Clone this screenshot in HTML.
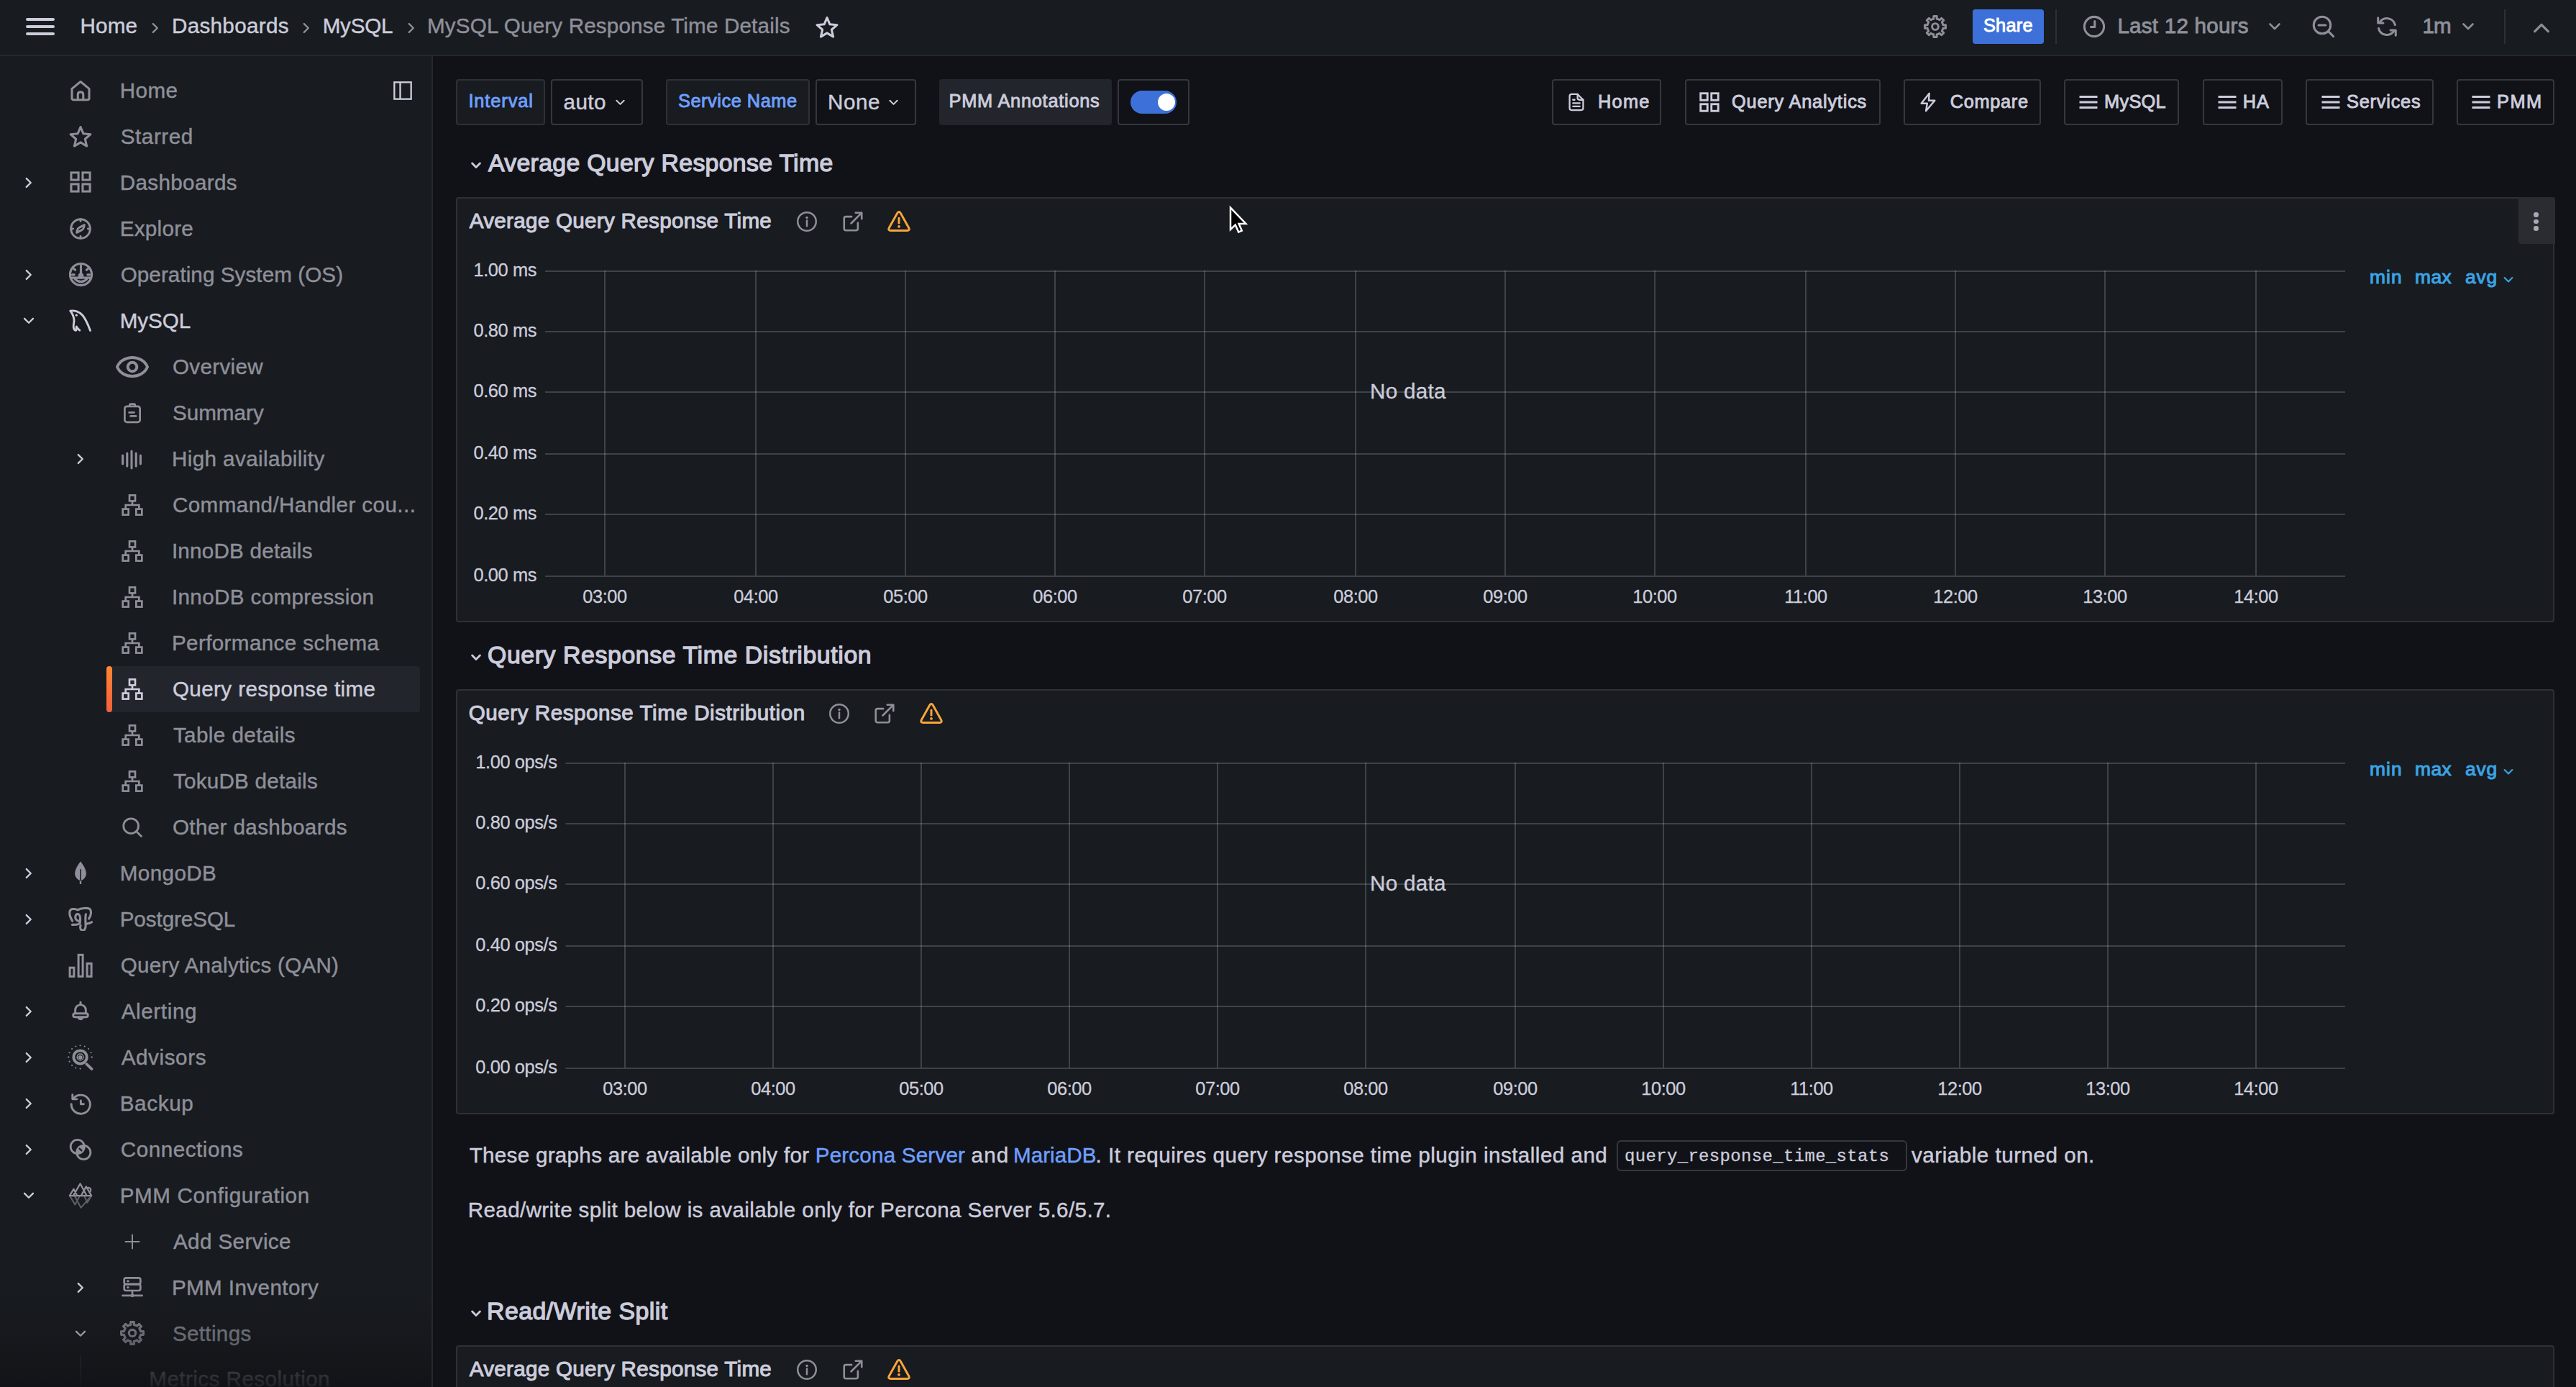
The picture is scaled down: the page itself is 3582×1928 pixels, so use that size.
<!DOCTYPE html>
<html><head><meta charset="utf-8"><style>
html,body{margin:0;padding:0}
body{width:3582px;height:1928px;overflow:hidden;position:relative;background:#111217;font-family:"Liberation Sans",sans-serif;color:#ccccdc}
svg{display:block}
</style></head><body>
<div style="position:absolute;left:0;top:0;width:3582px;height:76px;background:#181b1f"></div><div style="position:absolute;left:0;top:76px;width:3582px;height:2px;background:rgba(204,204,220,0.12)"></div><div style="position:absolute;left:36px;top:25px;width:40px;height:4.2px;border-radius:2.1px;background:#ccccdc"></div><div style="position:absolute;left:36px;top:35px;width:40px;height:4.2px;border-radius:2.1px;background:#ccccdc"></div><div style="position:absolute;left:36px;top:45px;width:40px;height:4.2px;border-radius:2.1px;background:#ccccdc"></div><div style="position:absolute;left:111.50px;top:21.45px;font-family:'Liberation Sans';font-size:29.60px;line-height:1;white-space:nowrap;letter-spacing:0.150px;color:#ccccdc;-webkit-text-stroke:0.45px #ccccdc;">Home</div><div style="position:absolute;left:205.0px;top:28.0px;width:22px;height:22px;color:#8e8f9a;"><svg width="22" height="22" viewBox="0 0 24 24"><g fill="none" stroke="currentColor" stroke-width="2.6" stroke-linecap="round" stroke-linejoin="round"><path d="M8.5 5.5 L15 12 L8.5 18.5"/></g></svg></div><div style="position:absolute;left:239.00px;top:21.45px;font-family:'Liberation Sans';font-size:29.60px;line-height:1;white-space:nowrap;letter-spacing:0.322px;color:#ccccdc;-webkit-text-stroke:0.45px #ccccdc;">Dashboards</div><div style="position:absolute;left:415.0px;top:28.0px;width:22px;height:22px;color:#8e8f9a;"><svg width="22" height="22" viewBox="0 0 24 24"><g fill="none" stroke="currentColor" stroke-width="2.6" stroke-linecap="round" stroke-linejoin="round"><path d="M8.5 5.5 L15 12 L8.5 18.5"/></g></svg></div><div style="position:absolute;left:448.70px;top:21.45px;font-family:'Liberation Sans';font-size:29.60px;line-height:1;white-space:nowrap;letter-spacing:-0.216px;color:#ccccdc;-webkit-text-stroke:0.45px #ccccdc;">MySQL</div><div style="position:absolute;left:560.5px;top:28.0px;width:22px;height:22px;color:#8e8f9a;"><svg width="22" height="22" viewBox="0 0 24 24"><g fill="none" stroke="currentColor" stroke-width="2.6" stroke-linecap="round" stroke-linejoin="round"><path d="M8.5 5.5 L15 12 L8.5 18.5"/></g></svg></div><div style="position:absolute;left:594.00px;top:21.45px;font-family:'Liberation Sans';font-size:29.60px;line-height:1;white-space:nowrap;letter-spacing:0.173px;color:#8e8f9a;-webkit-text-stroke:0.45px #8e8f9a;">MySQL Query Response Time Details</div><div style="position:absolute;left:1134.0px;top:21.5px;width:32px;height:32px;color:#ccccdc;"><svg width="32" height="32" viewBox="0 0 24 24"><g fill="none" stroke="currentColor" stroke-width="2.3" stroke-linecap="round" stroke-linejoin="round"><path d="M12.00 1.90 L14.94 8.85 L22.46 9.50 L16.76 14.45 L18.47 21.80 L12.00 17.90 L5.53 21.80 L7.24 14.45 L1.54 9.50 L9.06 8.85Z"/></g></svg></div><div style="position:absolute;left:2675.0px;top:21.0px;width:32px;height:32px;color:#8e8f9a;"><svg width="32" height="32" viewBox="0 0 24 24"><g fill="none" stroke="currentColor" stroke-width="2.2" stroke-linecap="round" stroke-linejoin="round"><path d="M8.82 4.33 L10.38 3.86 L10.36 1.12 L13.64 1.12 L13.62 3.86 L15.18 4.33 L16.61 5.10 L18.54 3.15 L20.85 5.46 L18.90 7.39 L19.67 8.82 L20.14 10.38 L22.88 10.36 L22.88 13.64 L20.14 13.62 L19.67 15.18 L18.90 16.61 L20.85 18.54 L18.54 20.85 L16.61 18.90 L15.18 19.67 L13.62 20.14 L13.64 22.88 L10.36 22.88 L10.38 20.14 L8.82 19.67 L7.39 18.90 L5.46 20.85 L3.15 18.54 L5.10 16.61 L4.33 15.18 L3.86 13.62 L1.12 13.64 L1.12 10.36 L3.86 10.38 L4.33 8.82 L5.10 7.39 L3.15 5.46 L5.46 3.15 L7.39 5.10Z"/><circle cx="12" cy="12" r="3.3"/></g></svg></div><div style="position:absolute;left:2743px;top:13px;width:99px;height:48px;box-sizing:border-box;background:#3d71d9;border-radius:4px;"></div><div style="position:absolute;left:2758.00px;top:22.83px;font-family:'Liberation Sans';font-size:25.37px;line-height:1;white-space:nowrap;letter-spacing:0.208px;color:#ffffff;-webkit-text-stroke:0.9px #ffffff;">Share</div><div style="position:absolute;left:2858px;top:13px;width:2px;height:48px;background:rgba(204,204,220,0.12)"></div><div style="position:absolute;left:2896.0px;top:21.0px;width:32px;height:32px;color:#8e8f9a;"><svg width="32" height="32" viewBox="0 0 24 24"><g fill="none" stroke="currentColor" stroke-width="2.3" stroke-linecap="round" stroke-linejoin="round"><circle cx="12" cy="12" r="10.2"/><path d="M12.6 6.4 V12.4 H8.6"/></g></svg></div><div style="position:absolute;left:2944.40px;top:21.45px;font-family:'Liberation Sans';font-size:29.60px;line-height:1;white-space:nowrap;letter-spacing:0.230px;color:#8e8f9a;-webkit-text-stroke:0.9px #8e8f9a;">Last 12 hours</div><div style="position:absolute;left:3151.0px;top:25.0px;width:24px;height:24px;color:#8e8f9a;"><svg width="24" height="24" viewBox="0 0 24 24"><g fill="none" stroke="currentColor" stroke-width="2.6" stroke-linecap="round" stroke-linejoin="round"><path d="M5.5 8.5 L12 15 L18.5 8.5"/></g></svg></div><div style="position:absolute;left:3215.0px;top:20.6px;width:32px;height:32px;color:#8e8f9a;"><svg width="32" height="32" viewBox="0 0 24 24"><g fill="none" stroke="currentColor" stroke-width="2.3" stroke-linecap="round" stroke-linejoin="round"><circle cx="10.5" cy="10.5" r="8.8"/><path d="M17.2 17.2 L22.2 22.2M6.8 10.5H14.2"/></g></svg></div><div style="position:absolute;left:3303.0px;top:21.0px;width:32px;height:32px;color:#8e8f9a;"><svg width="32" height="32" viewBox="0 0 24 24"><g fill="none" stroke="currentColor" stroke-width="2.3" stroke-linecap="round" stroke-linejoin="round"><path d="M20.6 10.2 A8.8 8.8 0 0 0 4.4 7.8"/><path d="M3.4 13.8 A8.8 8.8 0 0 0 19.6 16.2"/><path d="M2.8 2.8 V8.2 H8.2M21.2 21.2 V15.8 H15.8"/></g></svg></div><div style="position:absolute;left:3368.50px;top:20.95px;font-family:'Liberation Sans';font-size:29.60px;line-height:1;white-space:nowrap;letter-spacing:-1.000px;color:#8e8f9a;-webkit-text-stroke:0.9px #8e8f9a;">1m</div><div style="position:absolute;left:3420.0px;top:25.0px;width:24px;height:24px;color:#8e8f9a;"><svg width="24" height="24" viewBox="0 0 24 24"><g fill="none" stroke="currentColor" stroke-width="2.6" stroke-linecap="round" stroke-linejoin="round"><path d="M5.5 8.5 L12 15 L18.5 8.5"/></g></svg></div><div style="position:absolute;left:3482px;top:13px;width:2px;height:48px;background:rgba(204,204,220,0.12)"></div><div style="position:absolute;left:3520.0px;top:25.0px;width:28px;height:28px;color:#8e8f9a;"><svg width="28" height="28" viewBox="0 0 24 24"><g fill="none" stroke="currentColor" stroke-width="2.8" stroke-linecap="round" stroke-linejoin="round"><path d="M4 16 L12 8 L20 16"/></g></svg></div><div style="position:absolute;left:0;top:78px;width:600px;height:1850px;background:#181b1f"></div><div style="position:absolute;left:600px;top:78px;width:2px;height:1850px;background:rgba(204,204,220,0.12)"></div><div style="position:absolute;left:546.0px;top:112.0px;width:28px;height:28px;color:#ccccdc;"><svg width="28" height="28" viewBox="0 0 24 24"><g fill="none" stroke="currentColor" stroke-width="2.0" stroke-linecap="butt" stroke-linejoin="miter"><rect x="2" y="2" width="20" height="20"/><path d="M9 2v20"/></g></svg></div><div style="position:absolute;left:96.0px;top:110.0px;width:32px;height:32px;color:#8e8f9a;"><svg width="32" height="32" viewBox="0 0 24 24"><g fill="none" stroke="currentColor" stroke-width="2.3" stroke-linecap="round" stroke-linejoin="round"><path d="M3 10 L12 2.6 L21 10 V19.8 Q21 21.5 19.3 21.5 H4.7 Q3 21.5 3 19.8 Z"/><path d="M9.2 21.5 V16 Q9.2 13.4 12 13.4 Q14.8 13.4 14.8 16 V21.5"/></g></svg></div><div style="position:absolute;left:166.70px;top:110.95px;font-family:'Liberation Sans';font-size:29.60px;line-height:1;white-space:nowrap;letter-spacing:0.484px;color:#8e8f9a;-webkit-text-stroke:0.45px #8e8f9a;">Home</div><div style="position:absolute;left:96.0px;top:174.0px;width:32px;height:32px;color:#8e8f9a;"><svg width="32" height="32" viewBox="0 0 24 24"><g fill="none" stroke="currentColor" stroke-width="2.3" stroke-linecap="round" stroke-linejoin="round"><path d="M12.00 1.90 L14.94 8.85 L22.46 9.50 L16.76 14.45 L18.47 21.80 L12.00 17.90 L5.53 21.80 L7.24 14.45 L1.54 9.50 L9.06 8.85Z"/></g></svg></div><div style="position:absolute;left:167.70px;top:174.95px;font-family:'Liberation Sans';font-size:29.60px;line-height:1;white-space:nowrap;letter-spacing:0.592px;color:#8e8f9a;-webkit-text-stroke:0.45px #8e8f9a;">Starred</div><div style="position:absolute;left:29.0px;top:243.0px;width:22px;height:22px;color:#ccccdc;"><svg width="22" height="22" viewBox="0 0 24 24"><g fill="none" stroke="currentColor" stroke-width="2.6" stroke-linecap="round" stroke-linejoin="round"><path d="M8.5 5.5 L15 12 L8.5 18.5"/></g></svg></div><div style="position:absolute;left:96.0px;top:237.0px;width:32px;height:32px;color:#8e8f9a;"><svg width="32" height="32" viewBox="0 0 24 24"><g fill="none" stroke="currentColor" stroke-width="2.3" stroke-linecap="butt" stroke-linejoin="miter"><rect x="2.2" y="2.2" width="7.6" height="7.6"/><rect x="14.2" y="2.2" width="7.6" height="7.6"/><rect x="2.2" y="14.2" width="7.6" height="7.6"/><rect x="14.2" y="14.2" width="7.6" height="7.6"/></g></svg></div><div style="position:absolute;left:166.70px;top:238.95px;font-family:'Liberation Sans';font-size:29.60px;line-height:1;white-space:nowrap;letter-spacing:0.378px;color:#8e8f9a;-webkit-text-stroke:0.45px #8e8f9a;">Dashboards</div><div style="position:absolute;left:96.0px;top:301.5px;width:32px;height:32px;color:#8e8f9a;"><svg width="32" height="32" viewBox="0 0 24 24"><g fill="none" stroke="currentColor" stroke-width="2.2" stroke-linecap="round" stroke-linejoin="round"><circle cx="12" cy="12" r="10"/><path d="M12 2v2.2M12 19.8V22M2 12h2.2M19.8 12H22"/><path d="M16 8 Q15.5 12.5 12.8 13.6 L8 16 Q8.5 11.5 11.2 10.4 Z"/></g></svg></div><div style="position:absolute;left:166.70px;top:302.95px;font-family:'Liberation Sans';font-size:29.60px;line-height:1;white-space:nowrap;letter-spacing:0.294px;color:#8e8f9a;-webkit-text-stroke:0.45px #8e8f9a;">Explore</div><div style="position:absolute;left:29.0px;top:371.0px;width:22px;height:22px;color:#ccccdc;"><svg width="22" height="22" viewBox="0 0 24 24"><g fill="none" stroke="currentColor" stroke-width="2.6" stroke-linecap="round" stroke-linejoin="round"><path d="M8.5 5.5 L15 12 L8.5 18.5"/></g></svg></div><div style="position:absolute;left:94.5px;top:363.5px;width:35px;height:35px;color:#8e8f9a;"><svg width="35" height="35" viewBox="0 0 24 24"><g fill="none" stroke="currentColor" stroke-width="2.2" stroke-linecap="round" stroke-linejoin="round"><circle cx="12" cy="12" r="10.3"/><path d="M12 12.5V6.5"/><path d="M12 3.6v1.6M5.4 6.7l1.2 1M18.6 6.7l-1.2 1M3.8 12.2h1.8M20.2 12.2h-1.8"/><path d="M3.5 15.2H20.5"/><path d="M6.5 16.5 Q12 21.5 17.5 16.5" /></g><circle cx="12" cy="13.3" r="2.6" fill="currentColor"/><path d="M4 15 H20 Q17 21 12 21 Q7 21 4 15Z" fill="currentColor" opacity="0"/></svg></div><div style="position:absolute;left:167.70px;top:366.95px;font-family:'Liberation Sans';font-size:29.60px;line-height:1;white-space:nowrap;letter-spacing:0.089px;color:#8e8f9a;-webkit-text-stroke:0.45px #8e8f9a;">Operating System (OS)</div><div style="position:absolute;left:29.0px;top:434.5px;width:22px;height:22px;color:#ccccdc;"><svg width="22" height="22" viewBox="0 0 24 24"><g fill="none" stroke="currentColor" stroke-width="2.6" stroke-linecap="round" stroke-linejoin="round"><path d="M5.5 8.5 L12 15 L18.5 8.5"/></g></svg></div><div style="position:absolute;left:94.0px;top:428.0px;width:36px;height:36px;color:#ccccdc;"><svg width="36" height="36" viewBox="0 0 24 24"><g fill="none" stroke="currentColor" stroke-width="1.9" stroke-linecap="round" stroke-linejoin="round"><path d="M2.6 2.8 C6 2.2 11 3.2 14 7 C17 10.8 19 15.5 21 21"/><path d="M2.6 2.8 C4.2 5 5.8 8 6 11.5 C6.1 13.5 5.2 15.5 5.5 18 C5.8 20.5 7.5 21.5 8 20.5 C8.3 19.5 7.8 18.5 8.2 17.3 C9 18.6 10 19.8 11.2 20.8"/></g><circle cx="8.2" cy="6.8" r="1.1" fill="currentColor"/></svg></div><div style="position:absolute;left:166.70px;top:430.95px;font-family:'Liberation Sans';font-size:29.60px;line-height:1;white-space:nowrap;letter-spacing:-0.016px;color:#ccccdc;-webkit-text-stroke:0.45px #ccccdc;">MySQL</div><div style="position:absolute;left:160.2px;top:485.7px;width:48px;height:48px;color:#8e8f9a;"><svg width="48" height="48" viewBox="0 0 48 48"><g fill="none" stroke="currentColor" stroke-width="4.0" stroke-linecap="round" stroke-linejoin="round"><path d="M3 24 C10 6.7 38 6.7 45 24 C38 41.3 10 41.3 3 24Z"/><circle cx="24" cy="24" r="6.3"/></g></svg></div><div style="position:absolute;left:239.90px;top:494.95px;font-family:'Liberation Sans';font-size:29.60px;line-height:1;white-space:nowrap;letter-spacing:0.356px;color:#8e8f9a;-webkit-text-stroke:0.45px #8e8f9a;">Overview</div><div style="position:absolute;left:168.5px;top:559.0px;width:30px;height:30px;color:#8e8f9a;"><svg width="30" height="30" viewBox="0 0 24 24"><g fill="none" stroke="currentColor" stroke-width="2.2" stroke-linecap="round" stroke-linejoin="round"><rect x="3.5" y="4.6" width="17" height="17.6" rx="2.5"/><path d="M9 4.6 V3.2 Q9 2 10.2 2 H13.8 Q15 2 15 3.2 V4.6"/><path d="M8.5 11.5H14M10 15.5H16"/></g></svg></div><div style="position:absolute;left:239.90px;top:558.95px;font-family:'Liberation Sans';font-size:29.60px;line-height:1;white-space:nowrap;letter-spacing:0.041px;color:#8e8f9a;-webkit-text-stroke:0.45px #8e8f9a;">Summary</div><div style="position:absolute;left:101.0px;top:627.0px;width:22px;height:22px;color:#ccccdc;"><svg width="22" height="22" viewBox="0 0 24 24"><g fill="none" stroke="currentColor" stroke-width="2.6" stroke-linecap="round" stroke-linejoin="round"><path d="M8.5 5.5 L15 12 L8.5 18.5"/></g></svg></div><div style="position:absolute;left:167.2px;top:623.0px;width:32px;height:32px;color:#8e8f9a;"><svg width="32" height="32" viewBox="0 0 24 24"><g fill="none" stroke="currentColor" stroke-width="2.3" stroke-linecap="round" stroke-linejoin="round"><path d="M2.7 7.6v8.8M7.35 5.3v13.4M12 3.1v17.8M16.65 5.3v13.4M21.3 7.6v8.8"/></g></svg></div><div style="position:absolute;left:238.90px;top:622.95px;font-family:'Liberation Sans';font-size:29.60px;line-height:1;white-space:nowrap;letter-spacing:0.424px;color:#8e8f9a;-webkit-text-stroke:0.45px #8e8f9a;">High availability</div><div style="position:absolute;left:168.0px;top:686.0px;width:32px;height:32px;color:#8e8f9a;"><svg width="32" height="32" viewBox="0 0 24 24"><g fill="none" stroke="currentColor" stroke-width="2.0" stroke-linecap="butt" stroke-linejoin="miter"><rect x="9" y="1.8" width="6" height="6"/><rect x="2" y="16.2" width="6" height="6"/><rect x="16" y="16.2" width="6" height="6"/><path d="M12 7.8V12M5 16.2V12H19V16.2"/></g></svg></div><div style="position:absolute;left:239.90px;top:686.95px;font-family:'Liberation Sans';font-size:29.60px;line-height:1;white-space:nowrap;letter-spacing:0.430px;color:#8e8f9a;-webkit-text-stroke:0.45px #8e8f9a;">Command/Handler cou...</div><div style="position:absolute;left:168.0px;top:750.0px;width:32px;height:32px;color:#8e8f9a;"><svg width="32" height="32" viewBox="0 0 24 24"><g fill="none" stroke="currentColor" stroke-width="2.0" stroke-linecap="butt" stroke-linejoin="miter"><rect x="9" y="1.8" width="6" height="6"/><rect x="2" y="16.2" width="6" height="6"/><rect x="16" y="16.2" width="6" height="6"/><path d="M12 7.8V12M5 16.2V12H19V16.2"/></g></svg></div><div style="position:absolute;left:238.90px;top:750.95px;font-family:'Liberation Sans';font-size:29.60px;line-height:1;white-space:nowrap;letter-spacing:0.240px;color:#8e8f9a;-webkit-text-stroke:0.45px #8e8f9a;">InnoDB details</div><div style="position:absolute;left:168.0px;top:814.0px;width:32px;height:32px;color:#8e8f9a;"><svg width="32" height="32" viewBox="0 0 24 24"><g fill="none" stroke="currentColor" stroke-width="2.0" stroke-linecap="butt" stroke-linejoin="miter"><rect x="9" y="1.8" width="6" height="6"/><rect x="2" y="16.2" width="6" height="6"/><rect x="16" y="16.2" width="6" height="6"/><path d="M12 7.8V12M5 16.2V12H19V16.2"/></g></svg></div><div style="position:absolute;left:238.90px;top:814.95px;font-family:'Liberation Sans';font-size:29.60px;line-height:1;white-space:nowrap;letter-spacing:0.376px;color:#8e8f9a;-webkit-text-stroke:0.45px #8e8f9a;">InnoDB compression</div><div style="position:absolute;left:168.0px;top:878.0px;width:32px;height:32px;color:#8e8f9a;"><svg width="32" height="32" viewBox="0 0 24 24"><g fill="none" stroke="currentColor" stroke-width="2.0" stroke-linecap="butt" stroke-linejoin="miter"><rect x="9" y="1.8" width="6" height="6"/><rect x="2" y="16.2" width="6" height="6"/><rect x="16" y="16.2" width="6" height="6"/><path d="M12 7.8V12M5 16.2V12H19V16.2"/></g></svg></div><div style="position:absolute;left:238.90px;top:878.95px;font-family:'Liberation Sans';font-size:29.60px;line-height:1;white-space:nowrap;letter-spacing:0.397px;color:#8e8f9a;-webkit-text-stroke:0.45px #8e8f9a;">Performance schema</div><div style="position:absolute;left:148px;top:926px;width:436px;height:64px;box-sizing:border-box;background:#22252b;border-radius:4px;"></div><div style="position:absolute;left:148px;top:926px;width:8px;height:64px;background:linear-gradient(#ff8833,#f55f3e);border-radius:4px"></div><div style="position:absolute;left:168.0px;top:942.0px;width:32px;height:32px;color:#ccccdc;"><svg width="32" height="32" viewBox="0 0 24 24"><g fill="none" stroke="currentColor" stroke-width="2.0" stroke-linecap="butt" stroke-linejoin="miter"><rect x="9" y="1.8" width="6" height="6"/><rect x="2" y="16.2" width="6" height="6"/><rect x="16" y="16.2" width="6" height="6"/><path d="M12 7.8V12M5 16.2V12H19V16.2"/></g></svg></div><div style="position:absolute;left:239.90px;top:942.95px;font-family:'Liberation Sans';font-size:29.60px;line-height:1;white-space:nowrap;letter-spacing:0.417px;color:#ccccdc;-webkit-text-stroke:0.45px #ccccdc;">Query response time</div><div style="position:absolute;left:168.0px;top:1006.0px;width:32px;height:32px;color:#8e8f9a;"><svg width="32" height="32" viewBox="0 0 24 24"><g fill="none" stroke="currentColor" stroke-width="2.0" stroke-linecap="butt" stroke-linejoin="miter"><rect x="9" y="1.8" width="6" height="6"/><rect x="2" y="16.2" width="6" height="6"/><rect x="16" y="16.2" width="6" height="6"/><path d="M12 7.8V12M5 16.2V12H19V16.2"/></g></svg></div><div style="position:absolute;left:240.90px;top:1006.95px;font-family:'Liberation Sans';font-size:29.60px;line-height:1;white-space:nowrap;letter-spacing:0.422px;color:#8e8f9a;-webkit-text-stroke:0.45px #8e8f9a;">Table details</div><div style="position:absolute;left:168.0px;top:1070.0px;width:32px;height:32px;color:#8e8f9a;"><svg width="32" height="32" viewBox="0 0 24 24"><g fill="none" stroke="currentColor" stroke-width="2.0" stroke-linecap="butt" stroke-linejoin="miter"><rect x="9" y="1.8" width="6" height="6"/><rect x="2" y="16.2" width="6" height="6"/><rect x="16" y="16.2" width="6" height="6"/><path d="M12 7.8V12M5 16.2V12H19V16.2"/></g></svg></div><div style="position:absolute;left:240.90px;top:1070.95px;font-family:'Liberation Sans';font-size:29.60px;line-height:1;white-space:nowrap;letter-spacing:0.262px;color:#8e8f9a;-webkit-text-stroke:0.45px #8e8f9a;">TokuDB details</div><div style="position:absolute;left:169.0px;top:1135.0px;width:30px;height:30px;color:#8e8f9a;"><svg width="30" height="30" viewBox="0 0 24 24"><g fill="none" stroke="currentColor" stroke-width="2.2" stroke-linecap="round" stroke-linejoin="round"><circle cx="10.5" cy="10.5" r="8.3"/><path d="M16.6 16.6 L22 22"/></g></svg></div><div style="position:absolute;left:239.90px;top:1134.95px;font-family:'Liberation Sans';font-size:29.60px;line-height:1;white-space:nowrap;letter-spacing:0.388px;color:#8e8f9a;-webkit-text-stroke:0.45px #8e8f9a;">Other dashboards</div><div style="position:absolute;left:29.0px;top:1203.0px;width:22px;height:22px;color:#ccccdc;"><svg width="22" height="22" viewBox="0 0 24 24"><g fill="none" stroke="currentColor" stroke-width="2.6" stroke-linecap="round" stroke-linejoin="round"><path d="M8.5 5.5 L15 12 L8.5 18.5"/></g></svg></div><div style="position:absolute;left:96.0px;top:1197.4px;width:32px;height:32px;color:#8e8f9a;"><svg width="32" height="32" viewBox="0 0 24 24"><path fill="currentColor" d="M12 0.3 C13.8 2.6 17.9 8 17.9 13 C17.9 16.8 15 19.6 12 20.6 C9 19.6 6.1 16.8 6.1 13 C6.1 8 10.2 2.6 12 0.3Z"/><path d="M12 8.5 V20.8" stroke="#181b1f" stroke-width="1.2"/><path d="M12 21.4 V24" stroke="currentColor" stroke-width="1.8" stroke-linecap="round"/></svg></div><div style="position:absolute;left:166.70px;top:1198.95px;font-family:'Liberation Sans';font-size:29.60px;line-height:1;white-space:nowrap;letter-spacing:0.417px;color:#8e8f9a;-webkit-text-stroke:0.45px #8e8f9a;">MongoDB</div><div style="position:absolute;left:29.0px;top:1267.0px;width:22px;height:22px;color:#ccccdc;"><svg width="22" height="22" viewBox="0 0 24 24"><g fill="none" stroke="currentColor" stroke-width="2.6" stroke-linecap="round" stroke-linejoin="round"><path d="M8.5 5.5 L15 12 L8.5 18.5"/></g></svg></div><div style="position:absolute;left:95.0px;top:1260.0px;width:34px;height:34px;color:#8e8f9a;"><svg width="34" height="34" viewBox="0 0 24 24"><g fill="none" stroke="currentColor" stroke-width="2.2" stroke-linecap="round" stroke-linejoin="round"><path d="M4 14.3 C1.6 10.5 0.9 6.5 1.6 4.3 C2.5 2 6 2 9.2 3.4 C12.5 1.6 18.5 1.3 20.6 2.2 C22.9 3.3 22.7 8.5 20.2 12"/><path d="M11.4 16 C12 12 11.5 8.2 9.6 7.5 C7.6 7 6.6 9.5 7 11.5 C7.4 13.5 9.3 14.6 11.3 14.1"/><path d="M11.4 16 C11 17.6 9 18.1 3.8 17.9"/><path d="M17.2 7.6 C16.6 10 16.8 14 17 18.6 C17.2 22 15.5 24 13.6 23.5 C11.7 23 11.5 20.5 12 18.6"/><path d="M17.8 17 C19.6 16.8 21.6 16.4 23 15.3"/></g></svg></div><div style="position:absolute;left:166.70px;top:1262.95px;font-family:'Liberation Sans';font-size:29.60px;line-height:1;white-space:nowrap;letter-spacing:-0.063px;color:#8e8f9a;-webkit-text-stroke:0.45px #8e8f9a;">PostgreSQL</div><div style="position:absolute;left:94.0px;top:1323.7px;width:36px;height:36px;color:#8e8f9a;"><svg width="36" height="36" viewBox="0 0 24 24"><g fill="none" stroke="currentColor" stroke-width="2.0" stroke-linecap="butt" stroke-linejoin="miter"><rect x="2.07" y="14.1" width="3.83" height="8.1"/><rect x="10.07" y="2.2" width="4" height="20"/><rect x="18.07" y="10.2" width="4" height="12"/></g></svg></div><div style="position:absolute;left:167.70px;top:1326.95px;font-family:'Liberation Sans';font-size:29.60px;line-height:1;white-space:nowrap;letter-spacing:0.281px;color:#8e8f9a;-webkit-text-stroke:0.45px #8e8f9a;">Query Analytics (QAN)</div><div style="position:absolute;left:29.0px;top:1395.0px;width:22px;height:22px;color:#ccccdc;"><svg width="22" height="22" viewBox="0 0 24 24"><g fill="none" stroke="currentColor" stroke-width="2.6" stroke-linecap="round" stroke-linejoin="round"><path d="M8.5 5.5 L15 12 L8.5 18.5"/></g></svg></div><div style="position:absolute;left:96.0px;top:1388.5px;width:32px;height:32px;color:#8e8f9a;"><svg width="32" height="32" viewBox="0 0 24 24"><g fill="none" stroke="currentColor" stroke-width="2.2" stroke-linecap="round" stroke-linejoin="round"><path d="M6.5 14.6 V11.2 A5.5 5.5 0 0 1 17.5 11.2 V14.6"/><rect x="4.3" y="14.8" width="15.4" height="3.8" rx="1.9"/><path d="M9.6 18.8 A2.45 2.45 0 0 0 14.4 18.8"/><path d="M12 3.1 V5.4"/></g></svg></div><div style="position:absolute;left:168.70px;top:1390.95px;font-family:'Liberation Sans';font-size:29.60px;line-height:1;white-space:nowrap;letter-spacing:0.637px;color:#8e8f9a;-webkit-text-stroke:0.45px #8e8f9a;">Alerting</div><div style="position:absolute;left:29.0px;top:1459.0px;width:22px;height:22px;color:#ccccdc;"><svg width="22" height="22" viewBox="0 0 24 24"><g fill="none" stroke="currentColor" stroke-width="2.6" stroke-linecap="round" stroke-linejoin="round"><path d="M8.5 5.5 L15 12 L8.5 18.5"/></g></svg></div><div style="position:absolute;left:94.0px;top:1452.0px;width:36px;height:36px;color:#8e8f9a;"><svg width="36" height="36" viewBox="0 0 24 24"><g fill="none" stroke="currentColor" stroke-width="2.5" stroke-linecap="round" stroke-linejoin="round"><circle cx="11.7" cy="11.6" r="6.1"/><path d="M17.6 18.1 L22.3 22.6"/></g><g fill="none" stroke="currentColor" stroke-width="1.0" stroke-linecap="round" stroke-linejoin="round"><circle cx="11.7" cy="11.6" r="2.9"/></g><circle cx="11.7" cy="11.9" r="1.9" fill="currentColor"/><g fill="currentColor"><circle cx="11.70" cy="0.80" r="0.7"/><circle cx="15.83" cy="1.62" r="0.7"/><circle cx="19.34" cy="3.96" r="0.7"/><circle cx="21.68" cy="7.47" r="0.7"/><circle cx="22.50" cy="11.60" r="0.7"/><circle cx="11.70" cy="22.40" r="0.7"/><circle cx="7.57" cy="21.58" r="0.7"/><circle cx="4.06" cy="19.24" r="0.7"/><circle cx="1.72" cy="15.73" r="0.7"/><circle cx="0.90" cy="11.60" r="0.7"/><circle cx="1.72" cy="7.47" r="0.7"/><circle cx="4.06" cy="3.96" r="0.7"/><circle cx="7.57" cy="1.62" r="0.7"/></g></svg></div><div style="position:absolute;left:168.70px;top:1454.95px;font-family:'Liberation Sans';font-size:29.60px;line-height:1;white-space:nowrap;letter-spacing:0.610px;color:#8e8f9a;-webkit-text-stroke:0.45px #8e8f9a;">Advisors</div><div style="position:absolute;left:29.0px;top:1523.0px;width:22px;height:22px;color:#ccccdc;"><svg width="22" height="22" viewBox="0 0 24 24"><g fill="none" stroke="currentColor" stroke-width="2.6" stroke-linecap="round" stroke-linejoin="round"><path d="M8.5 5.5 L15 12 L8.5 18.5"/></g></svg></div><div style="position:absolute;left:96.0px;top:1518.0px;width:32px;height:32px;color:#8e8f9a;"><svg width="32" height="32" viewBox="0 0 24 24"><g fill="none" stroke="currentColor" stroke-width="2.2" stroke-linecap="round" stroke-linejoin="round"><path d="M4.2 7.2 A9.8 9.8 0 1 1 2.4 12.5"/><path d="M3.6 2.8 V7.4 H8.2"/><path d="M12.3 9v3.6h3"/></g></svg></div><div style="position:absolute;left:166.70px;top:1518.95px;font-family:'Liberation Sans';font-size:29.60px;line-height:1;white-space:nowrap;letter-spacing:0.679px;color:#8e8f9a;-webkit-text-stroke:0.45px #8e8f9a;">Backup</div><div style="position:absolute;left:29.0px;top:1587.0px;width:22px;height:22px;color:#ccccdc;"><svg width="22" height="22" viewBox="0 0 24 24"><g fill="none" stroke="currentColor" stroke-width="2.6" stroke-linecap="round" stroke-linejoin="round"><path d="M8.5 5.5 L15 12 L8.5 18.5"/></g></svg></div><div style="position:absolute;left:96.0px;top:1582.0px;width:32px;height:32px;color:#8e8f9a;"><svg width="32" height="32" viewBox="0 0 24 24"><g fill="none" stroke="currentColor" stroke-width="2.1" stroke-linecap="round" stroke-linejoin="round"><circle cx="8.8" cy="9" r="7.2"/><circle cx="15.2" cy="15" r="7.2"/></g><path d="M8.1 16.17 A7.2 7.2 0 0 1 15.9 7.83 A7.2 7.2 0 0 1 8.1 16.17Z" fill="currentColor"/><path d="M10.4 10.6 L13.6 13.4" stroke="#181b1f" stroke-width="1.7" stroke-linecap="butt"/><path d="M9.6 14.4 L10.9 15.6 M13.1 8.4 L14.4 9.6" stroke="#181b1f" stroke-width="1.2" opacity="0"/></svg></div><div style="position:absolute;left:167.70px;top:1582.95px;font-family:'Liberation Sans';font-size:29.60px;line-height:1;white-space:nowrap;letter-spacing:0.566px;color:#8e8f9a;-webkit-text-stroke:0.45px #8e8f9a;">Connections</div><div style="position:absolute;left:29.0px;top:1650.5px;width:22px;height:22px;color:#ccccdc;"><svg width="22" height="22" viewBox="0 0 24 24"><g fill="none" stroke="currentColor" stroke-width="2.6" stroke-linecap="round" stroke-linejoin="round"><path d="M5.5 8.5 L12 15 L18.5 8.5"/></g></svg></div><div style="position:absolute;left:94.0px;top:1644.0px;width:36px;height:36px;color:#8e8f9a;"><svg width="36" height="36" viewBox="0 0 24 24"><g fill="none" stroke="currentColor" stroke-width="1.5" stroke-linecap="round" stroke-linejoin="round"><path d="M1.9 12.1 L5.6 5.8 L8.8 11.8M5.2 12.1 L11.7 0.9 L17.6 11.8M12.5 12.1 L17.2 3.6 L22.1 12.1M1.9 12.1H22.1"/><path d="M18.3 4.9 A2.1 2.1 0 1 1 20.4 8.6"/></g><g opacity="0.6"><g fill="none" stroke="currentColor" stroke-width="1.35" stroke-linecap="round" stroke-linejoin="round"><path d="M2 12.2 L6.9 20.3 L11.3 12.2M6.5 12.2 L12.3 23.2 L22 12.2M15.5 12.2 L18.2 18.4 L21.9 12.4"/></g></g></svg></div><div style="position:absolute;left:166.70px;top:1646.95px;font-family:'Liberation Sans';font-size:29.60px;line-height:1;white-space:nowrap;letter-spacing:0.637px;color:#8e8f9a;-webkit-text-stroke:0.45px #8e8f9a;">PMM Configuration</div><div style="position:absolute;left:172.0px;top:1714.0px;width:24px;height:24px;color:#8e8f9a;"><svg width="24" height="24" viewBox="0 0 24 24"><g fill="none" stroke="currentColor" stroke-width="2.0" stroke-linecap="round" stroke-linejoin="round"><path d="M12 2.5v19M2.5 12h19"/></g></svg></div><div style="position:absolute;left:240.90px;top:1710.95px;font-family:'Liberation Sans';font-size:29.60px;line-height:1;white-space:nowrap;letter-spacing:0.408px;color:#8e8f9a;-webkit-text-stroke:0.45px #8e8f9a;">Add Service</div><div style="position:absolute;left:101.0px;top:1779.0px;width:22px;height:22px;color:#ccccdc;"><svg width="22" height="22" viewBox="0 0 24 24"><g fill="none" stroke="currentColor" stroke-width="2.6" stroke-linecap="round" stroke-linejoin="round"><path d="M8.5 5.5 L15 12 L8.5 18.5"/></g></svg></div><div style="position:absolute;left:168.0px;top:1774.0px;width:32px;height:32px;color:#8e8f9a;"><svg width="32" height="32" viewBox="0 0 24 24"><g fill="none" stroke="currentColor" stroke-width="2.0" stroke-linecap="round" stroke-linejoin="round"><rect x="3.5" y="1.8" width="17" height="6.6" rx="2"/><rect x="3.5" y="8.4" width="17" height="6.6" rx="2"/><path d="M12 15V19.5M1.8 20.2H22.2"/><path d="M7 5.1h.8M7 11.7h.8"/></g><circle cx="12" cy="20.2" r="1.8" fill="currentColor"/></svg></div><div style="position:absolute;left:238.90px;top:1774.95px;font-family:'Liberation Sans';font-size:29.60px;line-height:1;white-space:nowrap;letter-spacing:0.417px;color:#8e8f9a;-webkit-text-stroke:0.45px #8e8f9a;">PMM Inventory</div><div style="position:absolute;left:101.0px;top:1842.5px;width:22px;height:22px;color:#ccccdc;"><svg width="22" height="22" viewBox="0 0 24 24"><g fill="none" stroke="currentColor" stroke-width="2.6" stroke-linecap="round" stroke-linejoin="round"><path d="M5.5 8.5 L12 15 L18.5 8.5"/></g></svg></div><div style="position:absolute;left:167.0px;top:1836.0px;width:34px;height:34px;color:#8e8f9a;"><svg width="34" height="34" viewBox="0 0 24 24"><g fill="none" stroke="currentColor" stroke-width="2.2" stroke-linecap="round" stroke-linejoin="round"><path d="M8.82 4.33 L10.38 3.86 L10.36 1.12 L13.64 1.12 L13.62 3.86 L15.18 4.33 L16.61 5.10 L18.54 3.15 L20.85 5.46 L18.90 7.39 L19.67 8.82 L20.14 10.38 L22.88 10.36 L22.88 13.64 L20.14 13.62 L19.67 15.18 L18.90 16.61 L20.85 18.54 L18.54 20.85 L16.61 18.90 L15.18 19.67 L13.62 20.14 L13.64 22.88 L10.36 22.88 L10.38 20.14 L8.82 19.67 L7.39 18.90 L5.46 20.85 L3.15 18.54 L5.10 16.61 L4.33 15.18 L3.86 13.62 L1.12 13.64 L1.12 10.36 L3.86 10.38 L4.33 8.82 L5.10 7.39 L3.15 5.46 L5.46 3.15 L7.39 5.10Z"/><circle cx="12" cy="12" r="3.3"/></g></svg></div><div style="position:absolute;left:239.90px;top:1838.95px;font-family:'Liberation Sans';font-size:29.60px;line-height:1;white-space:nowrap;letter-spacing:0.345px;color:#8e8f9a;-webkit-text-stroke:0.45px #8e8f9a;">Settings</div><div style="position:absolute;left:111px;top:1886px;width:2px;height:42px;background:rgba(204,204,220,0.12)"></div><div style="position:absolute;left:207.30px;top:1902.25px;font-family:'Liberation Sans';font-size:29.60px;line-height:1;white-space:nowrap;letter-spacing:0.463px;color:#8e8f9a;-webkit-text-stroke:0.45px #8e8f9a;">Metrics Resolution</div><div style="position:absolute;left:0;top:1790px;width:600px;height:138px;background:linear-gradient(rgba(17,18,23,0),rgba(17,18,23,0.35) 55%,rgba(17,18,23,0.88))"></div><div style="position:absolute;left:634px;top:110px;width:124px;height:64px;box-sizing:border-box;background:#181b1f;border:2px solid rgba(204,204,220,0.12);border-radius:4px;"></div><div style="position:absolute;left:651.40px;top:128.43px;font-family:'Liberation Sans';font-size:25.37px;line-height:1;white-space:nowrap;letter-spacing:0.910px;color:#6e9fff;-webkit-text-stroke:0.9px #6e9fff;">Interval</div><div style="position:absolute;left:766px;top:110px;width:128px;height:64px;box-sizing:border-box;background:#111217;border:2px solid rgba(204,204,220,0.20);border-radius:4px;"></div><div style="position:absolute;left:783.60px;top:126.75px;font-family:'Liberation Sans';font-size:29.60px;line-height:1;white-space:nowrap;letter-spacing:0.427px;color:#ccccdc;-webkit-text-stroke:0.45px #ccccdc;">auto</div><div style="position:absolute;left:852.5px;top:132.5px;width:19px;height:19px;color:#ccccdc;"><svg width="19" height="19" viewBox="0 0 24 24"><g fill="none" stroke="currentColor" stroke-width="2.6" stroke-linecap="round" stroke-linejoin="round"><path d="M5.5 8.5 L12 15 L18.5 8.5"/></g></svg></div><div style="position:absolute;left:926px;top:110px;width:200px;height:64px;box-sizing:border-box;background:#181b1f;border:2px solid rgba(204,204,220,0.12);border-radius:4px;"></div><div style="position:absolute;left:943.00px;top:128.43px;font-family:'Liberation Sans';font-size:25.37px;line-height:1;white-space:nowrap;letter-spacing:0.532px;color:#6e9fff;-webkit-text-stroke:0.9px #6e9fff;">Service Name</div><div style="position:absolute;left:1134px;top:110px;width:140px;height:64px;box-sizing:border-box;background:#111217;border:2px solid rgba(204,204,220,0.20);border-radius:4px;"></div><div style="position:absolute;left:1151.00px;top:126.75px;font-family:'Liberation Sans';font-size:29.60px;line-height:1;white-space:nowrap;letter-spacing:0.580px;color:#ccccdc;-webkit-text-stroke:0.45px #ccccdc;">None</div><div style="position:absolute;left:1232.5px;top:132.5px;width:19px;height:19px;color:#ccccdc;"><svg width="19" height="19" viewBox="0 0 24 24"><g fill="none" stroke="currentColor" stroke-width="2.6" stroke-linecap="round" stroke-linejoin="round"><path d="M5.5 8.5 L12 15 L18.5 8.5"/></g></svg></div><div style="position:absolute;left:1306px;top:110px;width:240px;height:64px;box-sizing:border-box;background:#22252b;border-radius:4px;"></div><div style="position:absolute;left:1319.60px;top:128.43px;font-family:'Liberation Sans';font-size:25.37px;line-height:1;white-space:nowrap;letter-spacing:0.745px;color:#ccccdc;-webkit-text-stroke:0.9px #ccccdc;">PMM Annotations</div><div style="position:absolute;left:1554px;top:110px;width:100px;height:64px;box-sizing:border-box;background:#111217;border:2px solid rgba(204,204,220,0.20);border-radius:4px;"></div><div style="position:absolute;left:1572px;top:126px;width:64px;height:32px;border-radius:16px;background:#3d71d9"></div><div style="position:absolute;left:1609.5px;top:129.7px;width:24.5px;height:24.5px;border-radius:50%;background:#fff"></div><div style="position:absolute;left:2158px;top:110px;width:152px;height:64px;box-sizing:border-box;background:#111217;border:2px solid rgba(204,204,220,0.20);border-radius:4px;"></div><div style="position:absolute;left:2179.0px;top:129.0px;width:26px;height:26px;color:#ccccdc;"><svg width="26" height="26" viewBox="0 0 24 24"><g fill="none" stroke="currentColor" stroke-width="2.1" stroke-linecap="round" stroke-linejoin="round"><path d="M13.5 1.8 H5.8 Q3.3 1.8 3.3 4.3 V19.7 Q3.3 22.2 5.8 22.2 H18.2 Q20.7 22.2 20.7 19.7 V9Z"/><path d="M13.5 1.8 V6.5 Q13.5 9 16 9 H20.7"/><path d="M7.6 13.2H16.4M7.6 17.4H16.4M7.6 9H9.8"/></g></svg></div><div style="position:absolute;left:2222.00px;top:128.63px;font-family:'Liberation Sans';font-size:25.37px;line-height:1;white-space:nowrap;letter-spacing:1.253px;color:#ccccdc;-webkit-text-stroke:0.9px #ccccdc;">Home</div><div style="position:absolute;left:2343px;top:110px;width:272px;height:64px;box-sizing:border-box;background:#111217;border:2px solid rgba(204,204,220,0.20);border-radius:4px;"></div><div style="position:absolute;left:2362.0px;top:127.0px;width:30px;height:30px;color:#ccccdc;"><svg width="30" height="30" viewBox="0 0 24 24"><g fill="none" stroke="currentColor" stroke-width="2.3" stroke-linecap="butt" stroke-linejoin="miter"><rect x="2.2" y="2.2" width="7.6" height="7.6"/><rect x="14.2" y="2.2" width="7.6" height="7.6"/><rect x="2.2" y="14.2" width="7.6" height="7.6"/><rect x="14.2" y="14.2" width="7.6" height="7.6"/></g></svg></div><div style="position:absolute;left:2408.00px;top:128.63px;font-family:'Liberation Sans';font-size:25.37px;line-height:1;white-space:nowrap;letter-spacing:0.793px;color:#ccccdc;-webkit-text-stroke:0.9px #ccccdc;">Query Analytics</div><div style="position:absolute;left:2647px;top:110px;width:191px;height:64px;box-sizing:border-box;background:#111217;border:2px solid rgba(204,204,220,0.20);border-radius:4px;"></div><div style="position:absolute;left:2667.0px;top:128.0px;width:28px;height:28px;color:#ccccdc;"><svg width="28" height="28" viewBox="0 0 24 24"><g fill="none" stroke="currentColor" stroke-width="2.1" stroke-linecap="round" stroke-linejoin="round"><path d="M13.5 1.5 L4 13.5 H11 L9.5 22.5 L20 10 H12.8 Z"/></g></svg></div><div style="position:absolute;left:2711.70px;top:128.63px;font-family:'Liberation Sans';font-size:25.37px;line-height:1;white-space:nowrap;letter-spacing:0.684px;color:#ccccdc;-webkit-text-stroke:0.9px #ccccdc;">Compare</div><div style="position:absolute;left:2870px;top:110px;width:160px;height:64px;box-sizing:border-box;background:#111217;border:2px solid rgba(204,204,220,0.20);border-radius:4px;"></div><div style="position:absolute;left:2889.0px;top:127.0px;width:30px;height:30px;color:#ccccdc;"><svg width="30" height="30" viewBox="0 0 24 24"><g fill="none" stroke="currentColor" stroke-width="2.3" stroke-linecap="butt" stroke-linejoin="round"><path d="M2 6H22M2 12H22M2 18H22"/></g></svg></div><div style="position:absolute;left:2926.00px;top:128.63px;font-family:'Liberation Sans';font-size:25.37px;line-height:1;white-space:nowrap;letter-spacing:0.289px;color:#ccccdc;-webkit-text-stroke:0.9px #ccccdc;">MySQL</div><div style="position:absolute;left:3063px;top:110px;width:111px;height:64px;box-sizing:border-box;background:#111217;border:2px solid rgba(204,204,220,0.20);border-radius:4px;"></div><div style="position:absolute;left:3081.5px;top:127.0px;width:30px;height:30px;color:#ccccdc;"><svg width="30" height="30" viewBox="0 0 24 24"><g fill="none" stroke="currentColor" stroke-width="2.3" stroke-linecap="butt" stroke-linejoin="round"><path d="M2 6H22M2 12H22M2 18H22"/></g></svg></div><div style="position:absolute;left:3118.70px;top:128.63px;font-family:'Liberation Sans';font-size:25.37px;line-height:1;white-space:nowrap;letter-spacing:0.986px;color:#ccccdc;-webkit-text-stroke:0.9px #ccccdc;">HA</div><div style="position:absolute;left:3206px;top:110px;width:178px;height:64px;box-sizing:border-box;background:#111217;border:2px solid rgba(204,204,220,0.20);border-radius:4px;"></div><div style="position:absolute;left:3225.5px;top:127.0px;width:30px;height:30px;color:#ccccdc;"><svg width="30" height="30" viewBox="0 0 24 24"><g fill="none" stroke="currentColor" stroke-width="2.3" stroke-linecap="butt" stroke-linejoin="round"><path d="M2 6H22M2 12H22M2 18H22"/></g></svg></div><div style="position:absolute;left:3263.00px;top:128.63px;font-family:'Liberation Sans';font-size:25.37px;line-height:1;white-space:nowrap;letter-spacing:0.777px;color:#ccccdc;-webkit-text-stroke:0.9px #ccccdc;">Services</div><div style="position:absolute;left:3416px;top:110px;width:136px;height:64px;box-sizing:border-box;background:#111217;border:2px solid rgba(204,204,220,0.20);border-radius:4px;"></div><div style="position:absolute;left:3435.0px;top:127.0px;width:30px;height:30px;color:#ccccdc;"><svg width="30" height="30" viewBox="0 0 24 24"><g fill="none" stroke="currentColor" stroke-width="2.3" stroke-linecap="butt" stroke-linejoin="round"><path d="M2 6H22M2 12H22M2 18H22"/></g></svg></div><div style="position:absolute;left:3472.00px;top:128.63px;font-family:'Liberation Sans';font-size:25.37px;line-height:1;white-space:nowrap;letter-spacing:1.480px;color:#ccccdc;-webkit-text-stroke:0.9px #ccccdc;">PMM</div><div style="position:absolute;left:652.0px;top:219.5px;width:20px;height:20px;color:#ccccdc;"><svg width="20" height="20" viewBox="0 0 24 24"><g fill="none" stroke="currentColor" stroke-width="3.4" stroke-linecap="round" stroke-linejoin="round"><path d="M5.5 8.5 L12 15 L18.5 8.5"/></g></svg></div><div style="position:absolute;left:679.00px;top:209.67px;font-family:'Liberation Sans';font-size:33.82px;line-height:1;white-space:nowrap;letter-spacing:0.311px;color:#ccccdc;-webkit-text-stroke:1.3px #ccccdc;">Average Query Response Time</div><div style="position:absolute;left:634px;top:274px;width:2918px;height:591px;box-sizing:border-box;background:#181b1f;border:2px solid rgba(204,204,220,0.12);border-radius:4px;"></div><div style="position:absolute;left:652.70px;top:291.95px;font-family:'Liberation Sans';font-size:29.60px;line-height:1;white-space:nowrap;letter-spacing:0.300px;color:#ccccdc;-webkit-text-stroke:1.05px #ccccdc;">Average Query Response Time</div><div style="position:absolute;left:1106.5px;top:293.0px;width:30px;height:30px;color:#8e8f9a;"><svg width="30" height="30" viewBox="0 0 24 24"><g fill="none" stroke="currentColor" stroke-width="2.0" stroke-linecap="round" stroke-linejoin="round"><circle cx="12" cy="12" r="10.2"/><path d="M12 10.8 V17"/></g><circle cx="12" cy="7.6" r="1.4" fill="currentColor"/></svg></div><div style="position:absolute;left:1171.0px;top:293.0px;width:30px;height:30px;color:#8e8f9a;"><svg width="30" height="30" viewBox="0 0 24 24"><g fill="none" stroke="currentColor" stroke-width="2.1" stroke-linecap="round" stroke-linejoin="round"><path d="M17.5 13.5 V19.8 Q17.5 21.8 15.5 21.8 H4.2 Q2.2 21.8 2.2 19.8 V8.5 Q2.2 6.5 4.2 6.5 H10.5"/><path d="M15 2.2 H21.8 V9M10 14 L21.5 2.5"/></g></svg></div><div style="position:absolute;left:1234.0px;top:292.0px;width:32px;height:32px;color:#f8a53a;"><svg width="32" height="32" viewBox="0 0 24 24"><g fill="none" stroke="currentColor" stroke-width="2.2" stroke-linecap="round" stroke-linejoin="round"><path d="M10.3 3.2 Q12 0.6 13.7 3.2 L22.3 18.6 Q23.6 21.4 20.6 21.4 H3.4 Q0.4 21.4 1.7 18.6 Z"/><path d="M12 8.5 V13.6"/></g><circle cx="12" cy="17.2" r="1.4" fill="currentColor"/></svg></div><svg style="position:absolute;left:0;top:0" width="3582" height="1928"><rect x="758" y="376" width="2503" height="2" fill="rgba(204,204,220,0.22)"/><rect x="758" y="460" width="2503" height="2" fill="rgba(204,204,220,0.22)"/><rect x="758" y="544" width="2503" height="2" fill="rgba(204,204,220,0.22)"/><rect x="758" y="630" width="2503" height="2" fill="rgba(204,204,220,0.22)"/><rect x="758" y="714" width="2503" height="2" fill="rgba(204,204,220,0.22)"/><rect x="758" y="800" width="2503" height="2" fill="rgba(204,204,220,0.22)"/><rect x="840" y="376" width="2" height="424" fill="rgba(204,204,220,0.22)"/><rect x="1050" y="376" width="2" height="424" fill="rgba(204,204,220,0.22)"/><rect x="1258" y="376" width="2" height="424" fill="rgba(204,204,220,0.22)"/><rect x="1466" y="376" width="2" height="424" fill="rgba(204,204,220,0.22)"/><rect x="1674" y="376" width="2" height="424" fill="rgba(204,204,220,0.22)"/><rect x="1884" y="376" width="2" height="424" fill="rgba(204,204,220,0.22)"/><rect x="2092" y="376" width="2" height="424" fill="rgba(204,204,220,0.22)"/><rect x="2300" y="376" width="2" height="424" fill="rgba(204,204,220,0.22)"/><rect x="2510" y="376" width="2" height="424" fill="rgba(204,204,220,0.22)"/><rect x="2718" y="376" width="2" height="424" fill="rgba(204,204,220,0.22)"/><rect x="2926" y="376" width="2" height="424" fill="rgba(204,204,220,0.22)"/><rect x="3136" y="376" width="2" height="424" fill="rgba(204,204,220,0.22)"/></svg><div style="position:absolute;left:446px;width:300px;top:360.0px;font-size:25.4px;line-height:30px;letter-spacing:-0.4px;text-align:right;color:#ccccdc;white-space:nowrap;-webkit-text-stroke:0.3px #ccccdc">1.00 ms</div><div style="position:absolute;left:446px;width:300px;top:444.0px;font-size:25.4px;line-height:30px;letter-spacing:-0.4px;text-align:right;color:#ccccdc;white-space:nowrap;-webkit-text-stroke:0.3px #ccccdc">0.80 ms</div><div style="position:absolute;left:446px;width:300px;top:528.0px;font-size:25.4px;line-height:30px;letter-spacing:-0.4px;text-align:right;color:#ccccdc;white-space:nowrap;-webkit-text-stroke:0.3px #ccccdc">0.60 ms</div><div style="position:absolute;left:446px;width:300px;top:614.0px;font-size:25.4px;line-height:30px;letter-spacing:-0.4px;text-align:right;color:#ccccdc;white-space:nowrap;-webkit-text-stroke:0.3px #ccccdc">0.40 ms</div><div style="position:absolute;left:446px;width:300px;top:698.0px;font-size:25.4px;line-height:30px;letter-spacing:-0.4px;text-align:right;color:#ccccdc;white-space:nowrap;-webkit-text-stroke:0.3px #ccccdc">0.20 ms</div><div style="position:absolute;left:446px;width:300px;top:784.0px;font-size:25.4px;line-height:30px;letter-spacing:-0.4px;text-align:right;color:#ccccdc;white-space:nowrap;-webkit-text-stroke:0.3px #ccccdc">0.00 ms</div><div style="position:absolute;left:741.0px;width:200px;top:814.0px;font-size:25.4px;line-height:30px;letter-spacing:-0.4px;text-align:center;color:#ccccdc;-webkit-text-stroke:0.3px #ccccdc">03:00</div><div style="position:absolute;left:951.0px;width:200px;top:814.0px;font-size:25.4px;line-height:30px;letter-spacing:-0.4px;text-align:center;color:#ccccdc;-webkit-text-stroke:0.3px #ccccdc">04:00</div><div style="position:absolute;left:1159.0px;width:200px;top:814.0px;font-size:25.4px;line-height:30px;letter-spacing:-0.4px;text-align:center;color:#ccccdc;-webkit-text-stroke:0.3px #ccccdc">05:00</div><div style="position:absolute;left:1367.0px;width:200px;top:814.0px;font-size:25.4px;line-height:30px;letter-spacing:-0.4px;text-align:center;color:#ccccdc;-webkit-text-stroke:0.3px #ccccdc">06:00</div><div style="position:absolute;left:1575.0px;width:200px;top:814.0px;font-size:25.4px;line-height:30px;letter-spacing:-0.4px;text-align:center;color:#ccccdc;-webkit-text-stroke:0.3px #ccccdc">07:00</div><div style="position:absolute;left:1785.0px;width:200px;top:814.0px;font-size:25.4px;line-height:30px;letter-spacing:-0.4px;text-align:center;color:#ccccdc;-webkit-text-stroke:0.3px #ccccdc">08:00</div><div style="position:absolute;left:1993.0px;width:200px;top:814.0px;font-size:25.4px;line-height:30px;letter-spacing:-0.4px;text-align:center;color:#ccccdc;-webkit-text-stroke:0.3px #ccccdc">09:00</div><div style="position:absolute;left:2201.0px;width:200px;top:814.0px;font-size:25.4px;line-height:30px;letter-spacing:-0.4px;text-align:center;color:#ccccdc;-webkit-text-stroke:0.3px #ccccdc">10:00</div><div style="position:absolute;left:2411.0px;width:200px;top:814.0px;font-size:25.4px;line-height:30px;letter-spacing:-0.4px;text-align:center;color:#ccccdc;-webkit-text-stroke:0.3px #ccccdc">11:00</div><div style="position:absolute;left:2619.0px;width:200px;top:814.0px;font-size:25.4px;line-height:30px;letter-spacing:-0.4px;text-align:center;color:#ccccdc;-webkit-text-stroke:0.3px #ccccdc">12:00</div><div style="position:absolute;left:2827.0px;width:200px;top:814.0px;font-size:25.4px;line-height:30px;letter-spacing:-0.4px;text-align:center;color:#ccccdc;-webkit-text-stroke:0.3px #ccccdc">13:00</div><div style="position:absolute;left:3037.0px;width:200px;top:814.0px;font-size:25.4px;line-height:30px;letter-spacing:-0.4px;text-align:center;color:#ccccdc;-webkit-text-stroke:0.3px #ccccdc">14:00</div><div style="position:absolute;left:1858px;width:200px;top:528.0px;font-size:29.6px;line-height:32px;letter-spacing:0.3px;text-align:center;color:#ccccdc;-webkit-text-stroke:0.3px #ccccdc">No data</div><div style="position:absolute;left:3295.00px;top:371.93px;font-family:'Liberation Sans';font-size:26.42px;line-height:1;white-space:nowrap;letter-spacing:1.068px;color:#3ba3e6;-webkit-text-stroke:1.0px #3ba3e6;">min</div><div style="position:absolute;left:3358.00px;top:371.93px;font-family:'Liberation Sans';font-size:26.42px;line-height:1;white-space:nowrap;letter-spacing:0.409px;color:#3ba3e6;-webkit-text-stroke:1.0px #3ba3e6;">max</div><div style="position:absolute;left:3428.00px;top:371.93px;font-family:'Liberation Sans';font-size:26.42px;line-height:1;white-space:nowrap;letter-spacing:0.855px;color:#3ba3e6;-webkit-text-stroke:1.0px #3ba3e6;">avg</div><div style="position:absolute;left:3478.0px;top:379.0px;width:20px;height:20px;color:#3ba3e6;"><svg width="20" height="20" viewBox="0 0 24 24"><g fill="none" stroke="currentColor" stroke-width="2.6" stroke-linecap="round" stroke-linejoin="round"><path d="M5.5 8.5 L12 15 L18.5 8.5"/></g></svg></div><div style="position:absolute;left:3502px;top:274px;width:51px;height:65px;background:#2a2c32;border-radius:0 4px 0 4px"></div><div style="position:absolute;left:3523.05px;top:295.15px;width:6.5px;height:6.5px;border-radius:50%;background:#a9a9b6"></div><div style="position:absolute;left:3523.05px;top:304.65px;width:6.5px;height:6.5px;border-radius:50%;background:#a9a9b6"></div><div style="position:absolute;left:3523.05px;top:314.15px;width:6.5px;height:6.5px;border-radius:50%;background:#a9a9b6"></div><div style="position:absolute;left:652.0px;top:904.1px;width:20px;height:20px;color:#ccccdc;"><svg width="20" height="20" viewBox="0 0 24 24"><g fill="none" stroke="currentColor" stroke-width="3.4" stroke-linecap="round" stroke-linejoin="round"><path d="M5.5 8.5 L12 15 L18.5 8.5"/></g></svg></div><div style="position:absolute;left:678.00px;top:894.27px;font-family:'Liberation Sans';font-size:33.82px;line-height:1;white-space:nowrap;letter-spacing:0.603px;color:#ccccdc;-webkit-text-stroke:1.3px #ccccdc;">Query Response Time Distribution</div><div style="position:absolute;left:634px;top:958px;width:2918px;height:591px;box-sizing:border-box;background:#181b1f;border:2px solid rgba(204,204,220,0.12);border-radius:4px;"></div><div style="position:absolute;left:651.70px;top:975.95px;font-family:'Liberation Sans';font-size:29.60px;line-height:1;white-space:nowrap;letter-spacing:0.541px;color:#ccccdc;-webkit-text-stroke:1.05px #ccccdc;">Query Response Time Distribution</div><div style="position:absolute;left:1152.0px;top:977.0px;width:30px;height:30px;color:#8e8f9a;"><svg width="30" height="30" viewBox="0 0 24 24"><g fill="none" stroke="currentColor" stroke-width="2.0" stroke-linecap="round" stroke-linejoin="round"><circle cx="12" cy="12" r="10.2"/><path d="M12 10.8 V17"/></g><circle cx="12" cy="7.6" r="1.4" fill="currentColor"/></svg></div><div style="position:absolute;left:1215.4px;top:977.0px;width:30px;height:30px;color:#8e8f9a;"><svg width="30" height="30" viewBox="0 0 24 24"><g fill="none" stroke="currentColor" stroke-width="2.1" stroke-linecap="round" stroke-linejoin="round"><path d="M17.5 13.5 V19.8 Q17.5 21.8 15.5 21.8 H4.2 Q2.2 21.8 2.2 19.8 V8.5 Q2.2 6.5 4.2 6.5 H10.5"/><path d="M15 2.2 H21.8 V9M10 14 L21.5 2.5"/></g></svg></div><div style="position:absolute;left:1279.0px;top:976.0px;width:32px;height:32px;color:#f8a53a;"><svg width="32" height="32" viewBox="0 0 24 24"><g fill="none" stroke="currentColor" stroke-width="2.2" stroke-linecap="round" stroke-linejoin="round"><path d="M10.3 3.2 Q12 0.6 13.7 3.2 L22.3 18.6 Q23.6 21.4 20.6 21.4 H3.4 Q0.4 21.4 1.7 18.6 Z"/><path d="M12 8.5 V13.6"/></g><circle cx="12" cy="17.2" r="1.4" fill="currentColor"/></svg></div><svg style="position:absolute;left:0;top:0" width="3582" height="1928"><rect x="786.5" y="1060" width="2474.5" height="2" fill="rgba(204,204,220,0.22)"/><rect x="786.5" y="1144" width="2474.5" height="2" fill="rgba(204,204,220,0.22)"/><rect x="786.5" y="1228" width="2474.5" height="2" fill="rgba(204,204,220,0.22)"/><rect x="786.5" y="1314" width="2474.5" height="2" fill="rgba(204,204,220,0.22)"/><rect x="786.5" y="1398" width="2474.5" height="2" fill="rgba(204,204,220,0.22)"/><rect x="786.5" y="1484" width="2474.5" height="2" fill="rgba(204,204,220,0.22)"/><rect x="868" y="1060" width="2" height="424" fill="rgba(204,204,220,0.22)"/><rect x="1074" y="1060" width="2" height="424" fill="rgba(204,204,220,0.22)"/><rect x="1280" y="1060" width="2" height="424" fill="rgba(204,204,220,0.22)"/><rect x="1486" y="1060" width="2" height="424" fill="rgba(204,204,220,0.22)"/><rect x="1692" y="1060" width="2" height="424" fill="rgba(204,204,220,0.22)"/><rect x="1898" y="1060" width="2" height="424" fill="rgba(204,204,220,0.22)"/><rect x="2106" y="1060" width="2" height="424" fill="rgba(204,204,220,0.22)"/><rect x="2312" y="1060" width="2" height="424" fill="rgba(204,204,220,0.22)"/><rect x="2518" y="1060" width="2" height="424" fill="rgba(204,204,220,0.22)"/><rect x="2724" y="1060" width="2" height="424" fill="rgba(204,204,220,0.22)"/><rect x="2930" y="1060" width="2" height="424" fill="rgba(204,204,220,0.22)"/><rect x="3136" y="1060" width="2" height="424" fill="rgba(204,204,220,0.22)"/></svg><div style="position:absolute;left:474.5px;width:300px;top:1044.0px;font-size:25.4px;line-height:30px;letter-spacing:-0.4px;text-align:right;color:#ccccdc;white-space:nowrap;-webkit-text-stroke:0.3px #ccccdc">1.00 ops/s</div><div style="position:absolute;left:474.5px;width:300px;top:1128.0px;font-size:25.4px;line-height:30px;letter-spacing:-0.4px;text-align:right;color:#ccccdc;white-space:nowrap;-webkit-text-stroke:0.3px #ccccdc">0.80 ops/s</div><div style="position:absolute;left:474.5px;width:300px;top:1212.0px;font-size:25.4px;line-height:30px;letter-spacing:-0.4px;text-align:right;color:#ccccdc;white-space:nowrap;-webkit-text-stroke:0.3px #ccccdc">0.60 ops/s</div><div style="position:absolute;left:474.5px;width:300px;top:1298.0px;font-size:25.4px;line-height:30px;letter-spacing:-0.4px;text-align:right;color:#ccccdc;white-space:nowrap;-webkit-text-stroke:0.3px #ccccdc">0.40 ops/s</div><div style="position:absolute;left:474.5px;width:300px;top:1382.0px;font-size:25.4px;line-height:30px;letter-spacing:-0.4px;text-align:right;color:#ccccdc;white-space:nowrap;-webkit-text-stroke:0.3px #ccccdc">0.20 ops/s</div><div style="position:absolute;left:474.5px;width:300px;top:1468.0px;font-size:25.4px;line-height:30px;letter-spacing:-0.4px;text-align:right;color:#ccccdc;white-space:nowrap;-webkit-text-stroke:0.3px #ccccdc">0.00 ops/s</div><div style="position:absolute;left:769.0px;width:200px;top:1498.0px;font-size:25.4px;line-height:30px;letter-spacing:-0.4px;text-align:center;color:#ccccdc;-webkit-text-stroke:0.3px #ccccdc">03:00</div><div style="position:absolute;left:975.0px;width:200px;top:1498.0px;font-size:25.4px;line-height:30px;letter-spacing:-0.4px;text-align:center;color:#ccccdc;-webkit-text-stroke:0.3px #ccccdc">04:00</div><div style="position:absolute;left:1181.0px;width:200px;top:1498.0px;font-size:25.4px;line-height:30px;letter-spacing:-0.4px;text-align:center;color:#ccccdc;-webkit-text-stroke:0.3px #ccccdc">05:00</div><div style="position:absolute;left:1387.0px;width:200px;top:1498.0px;font-size:25.4px;line-height:30px;letter-spacing:-0.4px;text-align:center;color:#ccccdc;-webkit-text-stroke:0.3px #ccccdc">06:00</div><div style="position:absolute;left:1593.0px;width:200px;top:1498.0px;font-size:25.4px;line-height:30px;letter-spacing:-0.4px;text-align:center;color:#ccccdc;-webkit-text-stroke:0.3px #ccccdc">07:00</div><div style="position:absolute;left:1799.0px;width:200px;top:1498.0px;font-size:25.4px;line-height:30px;letter-spacing:-0.4px;text-align:center;color:#ccccdc;-webkit-text-stroke:0.3px #ccccdc">08:00</div><div style="position:absolute;left:2007.0px;width:200px;top:1498.0px;font-size:25.4px;line-height:30px;letter-spacing:-0.4px;text-align:center;color:#ccccdc;-webkit-text-stroke:0.3px #ccccdc">09:00</div><div style="position:absolute;left:2213.0px;width:200px;top:1498.0px;font-size:25.4px;line-height:30px;letter-spacing:-0.4px;text-align:center;color:#ccccdc;-webkit-text-stroke:0.3px #ccccdc">10:00</div><div style="position:absolute;left:2419.0px;width:200px;top:1498.0px;font-size:25.4px;line-height:30px;letter-spacing:-0.4px;text-align:center;color:#ccccdc;-webkit-text-stroke:0.3px #ccccdc">11:00</div><div style="position:absolute;left:2625.0px;width:200px;top:1498.0px;font-size:25.4px;line-height:30px;letter-spacing:-0.4px;text-align:center;color:#ccccdc;-webkit-text-stroke:0.3px #ccccdc">12:00</div><div style="position:absolute;left:2831.0px;width:200px;top:1498.0px;font-size:25.4px;line-height:30px;letter-spacing:-0.4px;text-align:center;color:#ccccdc;-webkit-text-stroke:0.3px #ccccdc">13:00</div><div style="position:absolute;left:3037.0px;width:200px;top:1498.0px;font-size:25.4px;line-height:30px;letter-spacing:-0.4px;text-align:center;color:#ccccdc;-webkit-text-stroke:0.3px #ccccdc">14:00</div><div style="position:absolute;left:1858px;width:200px;top:1212.0px;font-size:29.6px;line-height:32px;letter-spacing:0.3px;text-align:center;color:#ccccdc;-webkit-text-stroke:0.3px #ccccdc">No data</div><div style="position:absolute;left:3295.00px;top:1055.93px;font-family:'Liberation Sans';font-size:26.42px;line-height:1;white-space:nowrap;letter-spacing:1.068px;color:#3ba3e6;-webkit-text-stroke:1.0px #3ba3e6;">min</div><div style="position:absolute;left:3358.00px;top:1055.93px;font-family:'Liberation Sans';font-size:26.42px;line-height:1;white-space:nowrap;letter-spacing:0.409px;color:#3ba3e6;-webkit-text-stroke:1.0px #3ba3e6;">max</div><div style="position:absolute;left:3428.00px;top:1055.93px;font-family:'Liberation Sans';font-size:26.42px;line-height:1;white-space:nowrap;letter-spacing:0.855px;color:#3ba3e6;-webkit-text-stroke:1.0px #3ba3e6;">avg</div><div style="position:absolute;left:3478.0px;top:1063.0px;width:20px;height:20px;color:#3ba3e6;"><svg width="20" height="20" viewBox="0 0 24 24"><g fill="none" stroke="currentColor" stroke-width="2.6" stroke-linecap="round" stroke-linejoin="round"><path d="M5.5 8.5 L12 15 L18.5 8.5"/></g></svg></div><div style="position:absolute;left:652.70px;top:1591.05px;font-family:'Liberation Sans';font-size:29.60px;line-height:1;white-space:nowrap;letter-spacing:0.298px;color:#ccccdc;-webkit-text-stroke:0.45px #ccccdc;">These graphs are available only for</div><div style="position:absolute;left:1133.70px;top:1591.05px;font-family:'Liberation Sans';font-size:29.60px;line-height:1;white-space:nowrap;letter-spacing:0.204px;color:#6e9fff;-webkit-text-stroke:0.45px #6e9fff;">Percona Server</div><div style="position:absolute;left:1350.60px;top:1591.05px;font-family:'Liberation Sans';font-size:29.60px;line-height:1;white-space:nowrap;letter-spacing:1.100px;color:#ccccdc;-webkit-text-stroke:0.45px #ccccdc;">and</div><div style="position:absolute;left:1409.00px;top:1591.05px;font-family:'Liberation Sans';font-size:29.60px;line-height:1;white-space:nowrap;letter-spacing:0.047px;color:#6e9fff;-webkit-text-stroke:0.45px #6e9fff;">MariaDB</div><div style="position:absolute;left:1523.60px;top:1591.05px;font-family:'Liberation Sans';font-size:29.60px;line-height:1;white-space:nowrap;letter-spacing:0.476px;color:#ccccdc;-webkit-text-stroke:0.45px #ccccdc;">. It requires query response time plugin installed and</div><div style="position:absolute;left:2248px;top:1585px;width:404px;height:43px;box-sizing:border-box;background:#111217;border:2px solid rgba(204,204,220,0.20);border-radius:6px;"></div><div style="position:absolute;left:2259.00px;top:1596.48px;font-family:'Liberation Mono';font-size:24.00px;line-height:1;white-space:nowrap;letter-spacing:0.327px;color:#ccccdc;-webkit-text-stroke:0.3px #ccccdc;">query_response_time_stats</div><div style="position:absolute;left:2658.00px;top:1591.05px;font-family:'Liberation Sans';font-size:29.60px;line-height:1;white-space:nowrap;letter-spacing:0.512px;color:#ccccdc;-webkit-text-stroke:0.45px #ccccdc;">variable turned on.</div><div style="position:absolute;left:650.70px;top:1666.75px;font-family:'Liberation Sans';font-size:29.60px;line-height:1;white-space:nowrap;letter-spacing:0.386px;color:#ccccdc;-webkit-text-stroke:0.45px #ccccdc;">Read/write split below is available only for Percona Server 5.6/5.7.</div><div style="position:absolute;left:652.0px;top:1815.5px;width:20px;height:20px;color:#ccccdc;"><svg width="20" height="20" viewBox="0 0 24 24"><g fill="none" stroke="currentColor" stroke-width="3.4" stroke-linecap="round" stroke-linejoin="round"><path d="M5.5 8.5 L12 15 L18.5 8.5"/></g></svg></div><div style="position:absolute;left:677.00px;top:1805.67px;font-family:'Liberation Sans';font-size:33.82px;line-height:1;white-space:nowrap;letter-spacing:0.502px;color:#ccccdc;-webkit-text-stroke:1.3px #ccccdc;">Read/Write Split</div><div style="position:absolute;left:634px;top:1870.4px;width:2918px;height:200px;box-sizing:border-box;background:#181b1f;border:2px solid rgba(204,204,220,0.12);border-radius:4px;"></div><div style="position:absolute;left:652.70px;top:1888.35px;font-family:'Liberation Sans';font-size:29.60px;line-height:1;white-space:nowrap;letter-spacing:0.300px;color:#ccccdc;-webkit-text-stroke:1.05px #ccccdc;">Average Query Response Time</div><div style="position:absolute;left:1106.5px;top:1889.4px;width:30px;height:30px;color:#8e8f9a;"><svg width="30" height="30" viewBox="0 0 24 24"><g fill="none" stroke="currentColor" stroke-width="2.0" stroke-linecap="round" stroke-linejoin="round"><circle cx="12" cy="12" r="10.2"/><path d="M12 10.8 V17"/></g><circle cx="12" cy="7.6" r="1.4" fill="currentColor"/></svg></div><div style="position:absolute;left:1171.0px;top:1889.4px;width:30px;height:30px;color:#8e8f9a;"><svg width="30" height="30" viewBox="0 0 24 24"><g fill="none" stroke="currentColor" stroke-width="2.1" stroke-linecap="round" stroke-linejoin="round"><path d="M17.5 13.5 V19.8 Q17.5 21.8 15.5 21.8 H4.2 Q2.2 21.8 2.2 19.8 V8.5 Q2.2 6.5 4.2 6.5 H10.5"/><path d="M15 2.2 H21.8 V9M10 14 L21.5 2.5"/></g></svg></div><div style="position:absolute;left:1234.0px;top:1888.4px;width:32px;height:32px;color:#f8a53a;"><svg width="32" height="32" viewBox="0 0 24 24"><g fill="none" stroke="currentColor" stroke-width="2.2" stroke-linecap="round" stroke-linejoin="round"><path d="M10.3 3.2 Q12 0.6 13.7 3.2 L22.3 18.6 Q23.6 21.4 20.6 21.4 H3.4 Q0.4 21.4 1.7 18.6 Z"/><path d="M12 8.5 V13.6"/></g><circle cx="12" cy="17.2" r="1.4" fill="currentColor"/></svg></div><svg style="position:absolute;left:1704px;top:283px" width="40" height="46" viewBox="0 0 40 46"><path d="M7 5.6 V36 L13.8 29.6 L18.2 39.6 L22.8 37.6 L18.6 27.9 H28.4 Z" fill="#000" stroke="#fff" stroke-width="2.5" stroke-linejoin="miter"/></svg>
</body></html>
